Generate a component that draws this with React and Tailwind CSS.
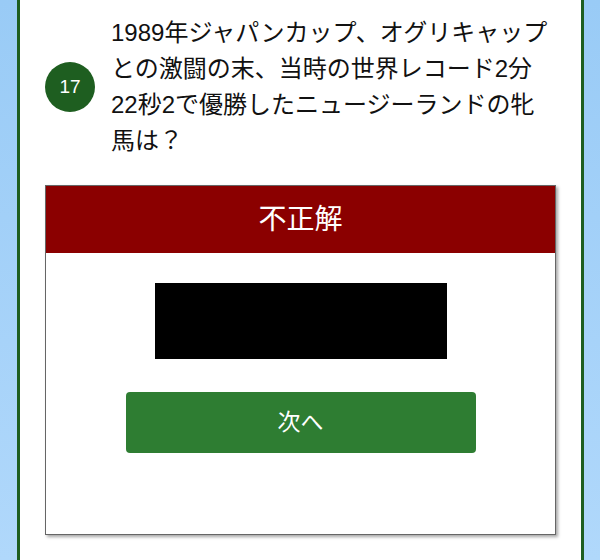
const font = { fontFamily: '"Liberation Sans", "Noto Sans CJK JP", sans-serif' };

const QuizResult = () => {
    return (
        <div className="min-h-[560px] bg-gradient-to-b from-[#99cbf6] to-[#b0d8fb]" style={font}>
            <div className="ml-[17px] w-[567px] min-h-[560px] bg-white border-x-[3px] border-[#1e5e20] px-[25px] pt-[15px]">

                <div className="flex items-center gap-4">
                    <div className="flex items-center justify-center shrink-0 w-[50px] h-[50px] rounded-full bg-[#1e5e20] text-white text-[19px]">
                        17
                    </div>
                    <p className="text-[24px] leading-[36px] text-[#111]">
                        1989年ジャパンカップ、オグリキャップとの激闘の末、当時の世界レコード2分22秒2で優勝したニュージーランドの牝馬は？
                    </p>
                </div>

                <div className="mt-[26px] border border-[#666] shadow-[2px_2px_3px_rgba(0,0,0,0.35)]">
                    <div className="flex items-center justify-center h-[67px] bg-[#8b0000] text-white text-[28px]">
                        不正解
                    </div>
                    <div className="flex flex-col items-center pt-[30px] pb-[81px]">
                        <div className="w-[292px] h-[76px] bg-black"></div>
                        <button className="mt-[33px] w-[350px] h-[61px] rounded-[4px] bg-[#2e7d32] text-white text-[23px]">
                            次へ
                        </button>
                    </div>
                </div>

            </div>
        </div>
    )
}

export default function App() {
    return <QuizResult />;
}
